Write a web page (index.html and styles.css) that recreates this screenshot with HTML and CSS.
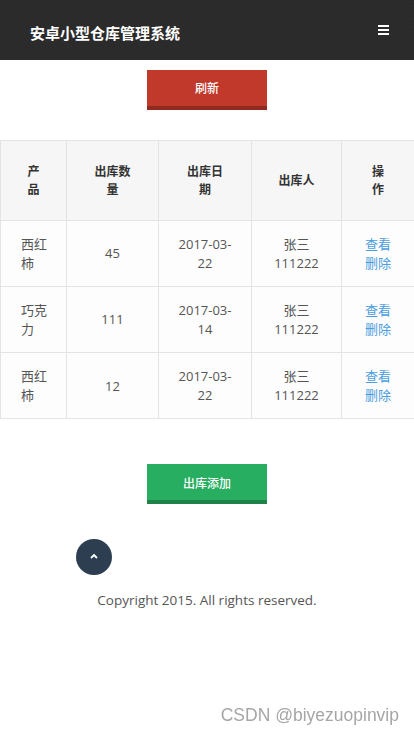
FILE: index.html
```html
<!DOCTYPE html>
<html lang="zh-CN">
<head>
<meta charset="utf-8">
<title>安卓小型仓库管理系统</title>
<link rel="stylesheet" href="styles.css">
</head>
<body>
<header class="topbar">
  <div class="brand">安卓小型仓库管理系统</div>
  <svg class="menu-icon" width="11" height="10" viewBox="0 0 11 10">
    <rect x="0" y="0" width="11" height="2" fill="#fff"/>
    <rect x="0" y="4" width="11" height="2" fill="#fff"/>
    <rect x="0" y="8" width="11" height="2" fill="#fff"/>
  </svg>
</header>

<div class="btn-wrap first">
  <a class="btn btn-red">刷新</a>
</div>

<table class="grid">
  <colgroup>
    <col class="c1"><col class="c2"><col class="c3"><col class="c4"><col class="c5">
  </colgroup>
  <thead>
    <tr><th>产品</th><th>出库数量</th><th>出库日期</th><th>出库人</th><th>操作</th></tr>
  </thead>
  <tbody>
    <tr><td class="name">西红柿</td><td>45</td><td>2017-03-22</td><td>张三111222</td><td><a class="lnk">查看</a> <a class="lnk">删除</a></td></tr>
    <tr><td class="name">巧克力</td><td>111</td><td>2017-03-14</td><td>张三111222</td><td><a class="lnk">查看</a> <a class="lnk">删除</a></td></tr>
    <tr><td class="name">西红柿</td><td>12</td><td>2017-03-22</td><td>张三111222</td><td><a class="lnk">查看</a> <a class="lnk">删除</a></td></tr>
  </tbody>
</table>

<div class="btn-wrap second">
  <a class="btn btn-green">出库添加</a>
</div>

<div class="totop-row">
  <div class="totop">
    <svg width="8" height="6" viewBox="0 0 8 6"><path d="M1 5 L4 2 L7 5" fill="none" stroke="#fff" stroke-width="1.8"/></svg>
  </div>
</div>

<footer class="copy">Copyright 2015. All rights reserved.</footer>

<div class="watermark">CSDN @biyezuopinvip</div>
</body>
</html>
```

FILE: styles.css
```css
html, body {
  margin: 0;
  padding: 0;
  background: #fff;
}
body {
  font-family: "Open Sans", "Noto Sans CJK SC", sans-serif;
  font-size: 13px;
  color: #555;
  line-height: 1.42857;
}
.topbar {
  height: 60px;
  background-color: #2a2a2a;
  background-image: repeating-linear-gradient(45deg, rgba(255,255,255,0.015) 0 1px, transparent 1px 3px);
  display: flex;
  align-items: center;
  justify-content: space-between;
  padding: 0 25px 0 30px;
}
.brand {
  color: #fff;
  font-size: 15px;
  font-weight: bold;
  font-family: "Noto Sans CJK SC", sans-serif;
  padding-top: 6px;
}
.menu-icon {
  display: block;
  margin-top: -1px;
}
.btn-wrap {
  display: flex;
  justify-content: center;
}
.btn-wrap.first { margin-top: 10px; }
.btn-wrap.second { margin-top: 45px; }
.btn {
  display: flex;
  align-items: center;
  justify-content: center;
  width: 120px;
  height: 36px;
  color: #fff;
  font-size: 12px;
  font-weight: 500;
  font-family: "Noto Sans CJK SC", sans-serif;
  text-decoration: none;
}
.btn-red {
  background: #c0392b;
  border-bottom: 4px solid #912b20;
}
.btn-green {
  background: #27ae60;
  border-bottom: 4px solid #1f8249;
}
.grid {
  margin-top: 30px;
  width: 100%;
  table-layout: fixed;
  border-collapse: collapse;
  border: 1px solid #cfcfcf;
}
.c1 { width: 66px; }
.c2 { width: 92px; }
.c3 { width: 93px; }
.c4 { width: 90px; }
.c5 { width: 73px; }
.grid th {
  background: #f6f6f6;
  color: #333;
  font-size: 12px;
  font-weight: bold;
  line-height: 18px;
  padding: 22px 25px 21px;
  text-align: center;
  vertical-align: middle;
  border: 1px solid #e4e4e4;
}
.grid td {
  background: #fdfdfd;
  padding: 14px 15px;
  text-align: center;
  vertical-align: middle;
  border: 1px solid #e4e4e4;
}
.grid td.name {
  text-align: left;
  padding-left: 20px;
  padding-right: 16px;
}
.lnk {
  color: #4a9de0;
  text-decoration: none;
}
.totop-row {
  margin-top: 35px;
  padding-left: 76px;
}
.totop {
  width: 36px;
  height: 36px;
  border-radius: 50%;
  background: #2c3e50;
  display: flex;
  align-items: center;
  justify-content: center;
}
.totop svg { display: block; margin-top: -2px; }
.copy {
  margin-top: 16px;
  text-align: center;
  color: #555;
  font-size: 13.5px;
}
.watermark {
  position: fixed;
  right: 15px;
  bottom: 8px;
  font-family: "Liberation Sans", Arial, sans-serif;
  font-size: 17.5px;
  color: #a6a6a6;
  text-shadow: 0 0 1px #fff;
}
```
